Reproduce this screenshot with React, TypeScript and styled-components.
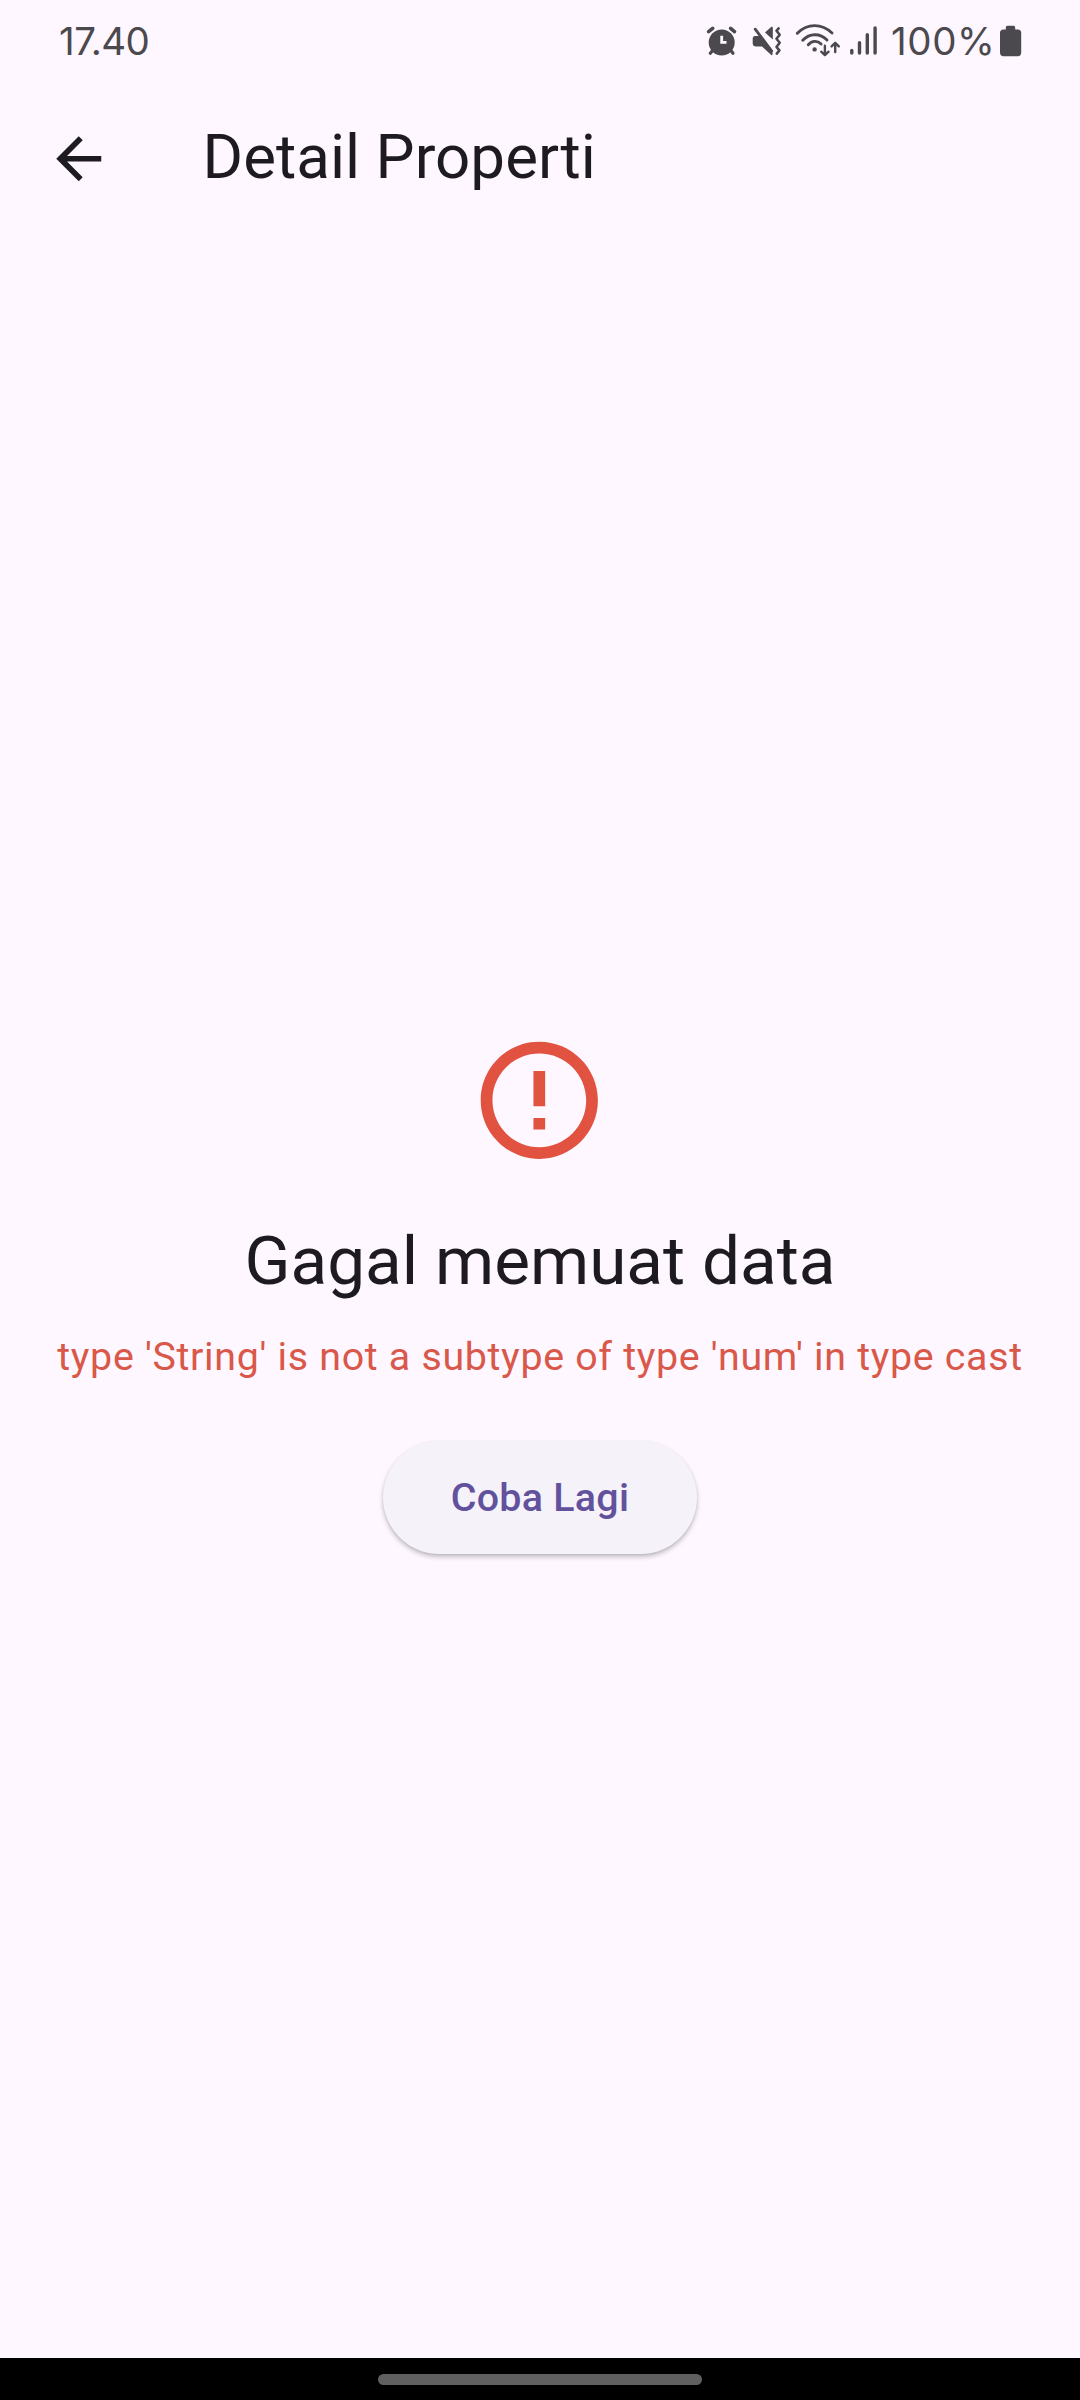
import React from "react";
import styled, { createGlobalStyle } from "styled-components";

const INK = "#4b494e";

const GlobalStyle = createGlobalStyle`
  body {
    margin: 0;
    background: #fef7ff;
  }
`;

const Screen = styled.div`
  display: flex;
  flex-direction: column;
  width: 1080px;
  height: 2400px;
  overflow: hidden;
  background: #fef7ff;
  color: #1d1b20;
  font-family: Roboto, "Liberation Sans", sans-serif;
`;

const StatusBar = styled.header`
  box-sizing: border-box;
  display: flex;
  justify-content: space-between;
  height: 79px;
  padding: 10px 58px 0 59px;
  color: ${INK};
`;

const StatusText = styled.span<{ $spacing: number }>`
  height: 60px;
  line-height: 62px;
  font-family: Inter, "Open Sans", sans-serif;
  font-size: 38.5px;
  font-weight: 400;
  letter-spacing: ${(p) => p.$spacing}px;
  white-space: nowrap;
`;

const StatusIcons = styled.div`
  display: flex;
`;

const StatusIcon = styled.svg<{ $gap?: number }>`
  display: block;
  flex: none;
  height: 60px;
  margin-left: ${(p) => p.$gap ?? 0}px;
  fill: none;
  stroke: ${INK};
  stroke-linecap: round;
  stroke-linejoin: round;
`;

const BatteryLabel = styled.div`
  width: 107px;
  margin-left: 11px;
`;

const AppBar = styled.nav`
  box-sizing: border-box;
  display: flex;
  align-items: center;
  gap: 45px;
  height: 157.5px;
`;

const BackButton = styled.button`
  box-sizing: border-box;
  display: flex;
  align-items: center;
  justify-content: center;
  width: 157.5px;
  height: 157.5px;
  padding: 1px 0 0;
  border: 0;
  background: none;
  color: #1d1b20;
`;

const Title = styled.h1`
  margin: 0;
  font-size: 61.875px;
  font-weight: 400;
  line-height: 78.75px;
  letter-spacing: 0.05px;
`;

const Content = styled.main`
  display: flex;
  flex: 1;
  flex-direction: column;
  align-items: center;
  justify-content: center;
`;

const ErrorIcon = styled.svg`
  display: block;
  width: 140.625px;
  height: 140.625px;
  margin-right: 1px;
  fill: #e15241;
`;

const Heading = styled.h2`
  margin: 45px 0 23.5px;
  font-size: 67.5px;
  font-weight: 400;
  line-height: 90px;
  white-space: nowrap;
`;

const Message = styled.p`
  margin: 0;
  color: #d9584a;
  font-size: 39.375px;
  line-height: 56.25px;
  letter-spacing: 0.685px;
  white-space: nowrap;
`;

const RetryButton = styled.button`
  box-sizing: border-box;
  height: 113px;
  margin: 55.5px 0 10.5px;
  padding: 1px 67.5px 0;
  border: 0;
  border-radius: 57px;
  background: #f5f2f9;
  box-shadow: 0 3px 5px rgba(0, 0, 0, 0.22), 0 1px 3px rgba(0, 0, 0, 0.08);
  color: #62519d;
  font-family: inherit;
  font-size: 39.375px;
  font-weight: 500;
  line-height: 56px;
  letter-spacing: 0.281px;
  white-space: nowrap;
`;

const NavigationBar = styled.footer`
  box-sizing: border-box;
  display: flex;
  justify-content: center;
  height: 42px;
  padding-top: 16px;
  background: #000;
`;

const GestureHandle = styled.div`
  width: 324px;
  height: 11px;
  border-radius: 6px;
  background: #606060;
`;

const AlarmIcon = () => (
  <StatusIcon width="36" viewBox="14 0 36 60">
    <circle cx="31.7" cy="32.5" r="13" fill={INK} stroke="none" />
    <path d="M18.6 21.6 22.7 18.4M44.5 21.6 40.6 18.4" strokeWidth="3.6" />
    <path d="M23 40 20.3 43.3M40.4 40 43 43.3" strokeWidth="3.2" />
    <path d="M31.7 25.7V32.3H36.5" stroke="#fef7ff" strokeWidth="2.8" strokeLinecap="butt" strokeLinejoin="miter" />
  </StatusIcon>
);

const MutedIcon = () => (
  <StatusIcon width="34" viewBox="60 0 34 60" $gap={10}>
    <path d="M65 26H70.5L82.5 40.5V44.2C82.5 45.2 81.6 45.4 81 44.8L72 36.5H66C64 36.5 62.7 35.4 62.7 33.5V29C62.7 27 63.5 26 65 26Z" fill={INK} stroke="none" />
    <path d="M75 22.4 81.1 17C81.9 16.4 82.8 16.7 82.8 17.8V29.4Z" fill={INK} stroke="none" />
    <path d="M65.2 19.2 81.7 41" strokeWidth="2.8" />
    <path d="M88.6 18.3 86.5 20.8 89.7 24.8 86.5 28.8 89.7 32.8 86.5 37 89.4 40.4 86.8 43.6" strokeWidth="2.6" />
  </StatusIcon>
);

const WifiIcon = () => (
  <StatusIcon width="50" viewBox="104 0 50 60" $gap={10}>
    <path d="M107.3 23.2C117.5 13.2 131.5 13 142 23" strokeWidth="2.9" />
    <path d="M112.7 30.3C119.6 23 130 22.8 137 29.9" strokeWidth="2.9" />
    <path d="M118.3 34.8C122 30.4 127.4 30.4 131.1 34" strokeWidth="2.9" />
    <circle cx="124.6" cy="39.4" r="2.2" fill={INK} stroke="none" />
    <path d="M134.9 35.8V45M131.2 41.7 134.9 45.2 138.6 41.7" strokeWidth="2.4" />
    <path d="M145.2 42V33M141.6 36.4 145.2 32.8 148.8 36.4" strokeWidth="2.4" />
  </StatusIcon>
);

const SignalIcon = () => (
  <StatusIcon width="32" viewBox="158 0 32 60" $gap={4}>
    <path d="M161.8 40.4V43M169.5 32.7V43M177.3 24.7V43M185.1 17.9V43" strokeWidth="3.4" />
  </StatusIcon>
);

const BatteryIcon = () => (
  <StatusIcon width="24" viewBox="138 0 24 60">
    <path d="M147.5 15.8H153.5Q155.2 15.8 155.2 17.5V19.5H157.8Q161.2 19.5 161.2 23V42.5Q161.2 46.2 157.8 46.2H143.4Q140 46.2 140 42.5V23Q140 19.5 143.4 19.5H145.8V17.5Q145.8 15.8 147.5 15.8Z" fill={INK} stroke="none" />
  </StatusIcon>
);

export default function App() {
  return (
    <>
      <GlobalStyle />
      <Screen>
        <StatusBar>
          <StatusText $spacing={-0.5}>17.40</StatusText>
          <StatusIcons>
            <AlarmIcon />
            <MutedIcon />
            <WifiIcon />
            <SignalIcon />
            <BatteryLabel>
              <StatusText $spacing={0.6}>100%</StatusText>
            </BatteryLabel>
            <BatteryIcon />
          </StatusIcons>
        </StatusBar>
        <AppBar>
          <BackButton aria-label="Kembali">
            <svg width="67.5" height="67.5" viewBox="0 0 24 24" fill="currentColor">
              <path d="M20 11H7.83l5.59-5.59L12 4l-8 8 8 8 1.41-1.41L7.83 13H20v-2z" />
            </svg>
          </BackButton>
          <Title>Detail Properti</Title>
        </AppBar>
        <Content>
          <ErrorIcon viewBox="0 0 24 24">
            <path d="M11 15h2v2h-2zm0-8h2v6h-2zm.99-5C6.47 2 2 6.48 2 12s4.47 10 9.99 10C17.52 22 22 17.52 22 12S17.52 2 11.99 2zM12 20c-4.42 0-8-3.58-8-8s3.58-8 8-8 8 3.58 8 8-3.58 8-8 8z" />
          </ErrorIcon>
          <Heading>Gagal memuat data</Heading>
          <Message>type 'String' is not a subtype of type 'num' in type cast</Message>
          <RetryButton>Coba Lagi</RetryButton>
        </Content>
        <NavigationBar>
          <GestureHandle />
        </NavigationBar>
      </Screen>
    </>
  );
}
